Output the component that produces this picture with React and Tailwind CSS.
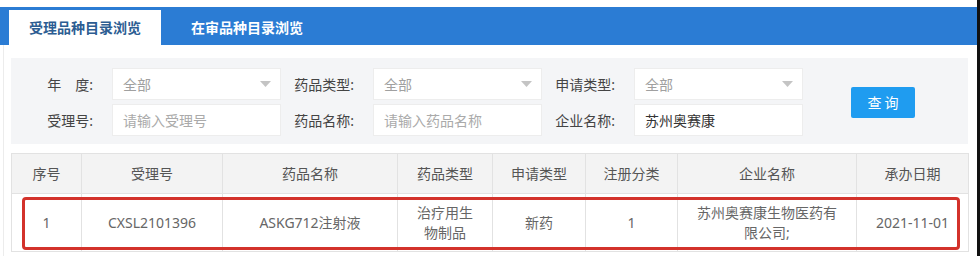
import React from "react";

const FONT = "font-['Noto_Sans','Noto_Sans_CJK_SC',sans-serif]";

function Arrow() {
  return (
    <svg width="11" height="6" viewBox="0 0 11 6" className="shrink-0">
      <path d="M0 0 L11 0 L5.5 6 Z" fill="#c4c4c4" />
    </svg>
  );
}

function Select({ value }) {
  return (
    <div className="ml-[19px] w-[169px] h-[32px] bg-white border border-[#ededed] flex items-center justify-between pl-[10px] pr-[9px] text-[14px] text-[#a0a0a0]">
      <span>{value}</span>
      <Arrow />
    </div>
  );
}

function Input({ placeholder, value }) {
  return (
    <div className="ml-[19px] w-[169px] h-[32px] bg-white border border-[#ededed] flex items-center pl-[10px] text-[14px]">
      {value ? (
        <span className="text-[#333]">{value}</span>
      ) : (
        <span className="text-[#aaa]">{placeholder}</span>
      )}
    </div>
  );
}

function Label({ w, children }) {
  return (
    <div className={`${w} text-right text-[14px] text-[#444] whitespace-pre`}>
      {children}
    </div>
  );
}

const columns = [
  { title: "序号", w: "w-[70px]" },
  { title: "受理号", w: "w-[141px]" },
  { title: "药品名称", w: "w-[175px]" },
  { title: "药品类型", w: "w-[95px]" },
  { title: "申请类型", w: "w-[93px]" },
  { title: "注册分类", w: "w-[92px]" },
  { title: "企业名称", w: "w-[179px]" },
  { title: "承办日期", w: "w-[112px]" },
];

const row = [
  "1",
  "CXSL2101396",
  "ASKG712注射液",
  <>治疗用生<br />物制品</>,
  "新药",
  "1",
  <>苏州奥赛康生物医药有<br />限公司;</>,
  "2021-11-01",
];

export default function App() {
  return (
    <div className={`w-[980px] h-[256px] bg-white flex overflow-hidden ${FONT}`}>
      <div className="w-[977px] pt-[7px] flex flex-col">
        {/* Tabs */}
        <div className="h-[38px] bg-[#2b7cd4] flex items-end pl-[9px]">
          <div className="w-[152px] h-[35px] bg-white flex items-center justify-center text-[14px] font-semibold text-[#2c5d92]">
            受理品种目录浏览
          </div>
          <div className="w-[172px] h-[35px] flex items-center justify-center text-[14px] font-semibold text-white">
            在审品种目录浏览
          </div>
        </div>

        <div className="ml-[3px] border-l border-[#ececec] pl-[7px] pt-[13px] flex-1">
          {/* Filters */}
          <div className="w-[957px] bg-[#f4f5f7] pt-[10px] pb-[8px] flex items-center">
            <div className="flex flex-col gap-[4px]">
              <div className="flex items-center h-[32px]">
                <Label w="w-[82px]">年　度:</Label>
                <Select value="全部" />
                <Label w="w-[73px]">药品类型:</Label>
                <Select value="全部" />
                <Label w="w-[73px]">申请类型:</Label>
                <Select value="全部" />
              </div>
              <div className="flex items-center h-[32px]">
                <Label w="w-[82px]">受理号:</Label>
                <Input placeholder="请输入受理号" />
                <Label w="w-[73px]">药品名称:</Label>
                <Input placeholder="请输入药品名称" />
                <Label w="w-[73px]">企业名称:</Label>
                <Input value="苏州奥赛康" />
              </div>
            </div>
            <button className="ml-[48px] w-[64px] h-[31px] bg-[#1f9cf0] rounded-[2px] text-white text-[14px] tracking-[3px] pl-[3px]">
              查询
            </button>
          </div>

          {/* Table */}
          <div className="relative mt-[9px] w-[957px]">
            <table className="w-[957px] table-fixed border-collapse text-[14px] text-[#666]">
              <thead>
                <tr className="h-[40px] bg-[#f3f3f3]">
                  {columns.map((c) => (
                    <th
                      key={c.title}
                      className={`${c.w} border border-[#e2e2e2] font-normal text-center text-[#555]`}
                    >
                      {c.title}
                    </th>
                  ))}
                </tr>
              </thead>
              <tbody>
                <tr className="h-[58px]">
                  {row.map((cell, i) => (
                    <td
                      key={i}
                      className="border border-[#e2e2e2] text-center leading-[20px]"
                    >
                      {cell}
                    </td>
                  ))}
                </tr>
              </tbody>
            </table>
            {/* highlight annotation */}
            <div className="absolute left-[11px] top-[44px] w-[938px] h-[53px] border-[3px] border-[#d3322b] rounded-[4px] pointer-events-none" />
          </div>
        </div>
      </div>
      <div className="w-[3px] h-full bg-[#111]" />
    </div>
  );
}
